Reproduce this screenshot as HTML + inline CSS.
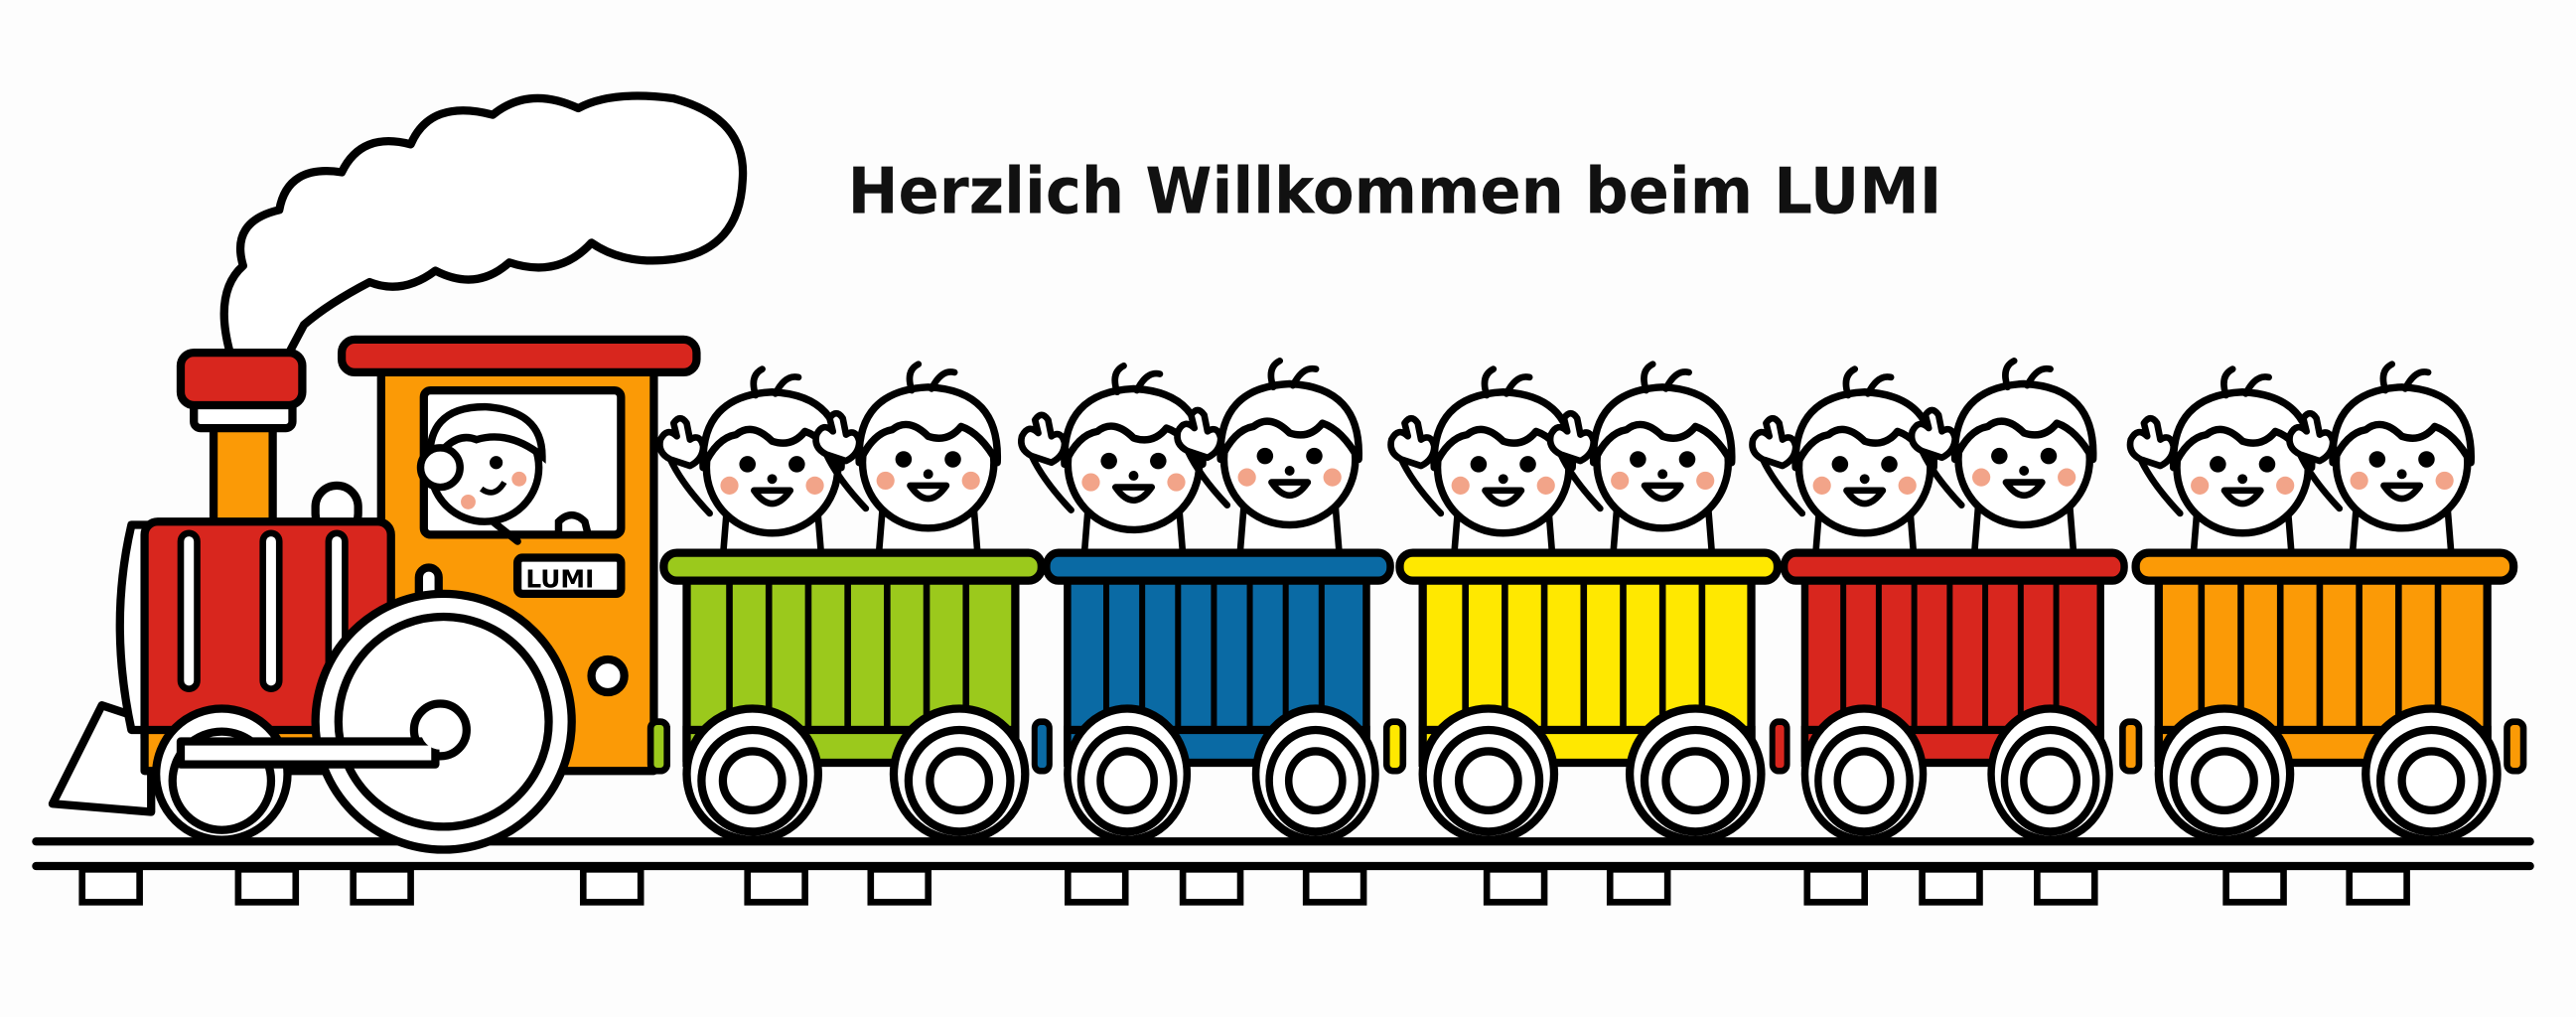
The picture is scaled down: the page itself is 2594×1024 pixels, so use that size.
<!DOCTYPE html>
<html><head><meta charset="utf-8"><style>
html,body{margin:0;padding:0;background:#fdfdfd;}
svg{display:block}
</style></head><body>
<svg width="2594" height="1024" viewBox="0 0 1568 620" preserveAspectRatio="none" xmlns="http://www.w3.org/2000/svg">
<defs>
<symbol id="kid" overflow="visible">
  <path d="M-30 55 L-28 30 Q0 45 28 30 L30 55" fill="#fff" stroke="#000" stroke-width="4" stroke-linejoin="round"/>
  <path d="M-38 28 Q-55 10 -62 -5" fill="none" stroke="#000" stroke-width="4" stroke-linecap="round"/>
  <path d="M-62 -5 q-8 -4 -6 -12 q4 -8 10 -2 l-2 -8 q4 -6 8 0 l2 10 q6 -4 8 4 q0 8 -8 12 z" fill="#fff" stroke="#000" stroke-width="4" stroke-linejoin="round"/>
  <circle cx="0" cy="0" r="40" fill="#fff" stroke="#000" stroke-width="4.5"/>
  <path d="M-42 0 Q-44 -44 0 -46 Q44 -44 42 0 Q32 -18 20 -22 Q12 -12 0 -16 Q-12 -28 -22 -20 Q-34 -18 -42 0 Z" fill="#fff" stroke="#000" stroke-width="4.5" stroke-linejoin="round"/>
  <path d="M-10 -44 q-4 -12 4 -16 M2 -45 q6 -12 14 -10" fill="none" stroke="#000" stroke-width="4" stroke-linecap="round"/>
  <circle cx="-15" cy="-2" r="5" fill="#000"/><circle cx="15" cy="-2" r="5" fill="#000"/>
  <circle cx="0" cy="7" r="3" fill="#000"/>
  <path d="M-11 14 Q0 30 11 14 Z" fill="#fff" stroke="#000" stroke-width="4" stroke-linejoin="round"/>
  <circle cx="-26" cy="11" r="5.5" fill="#f2a489"/><circle cx="26" cy="11" r="5.5" fill="#f2a489"/>
</symbol>
<symbol id="car" overflow="visible">
  <rect x="-8" y="440" width="10" height="30" rx="4" fill="currentColor" stroke="#000" stroke-width="4"/>
  <rect x="14" y="352" width="200" height="110" fill="currentColor" stroke="#000" stroke-width="5"/>
  <g stroke="#000" stroke-width="4">
    <line x1="40" y1="353" x2="40" y2="445"/><line x1="64" y1="353" x2="64" y2="445"/>
    <line x1="88" y1="353" x2="88" y2="445"/><line x1="112" y1="353" x2="112" y2="445"/>
    <line x1="136" y1="353" x2="136" y2="445"/><line x1="160" y1="353" x2="160" y2="445"/>
    <line x1="184" y1="353" x2="184" y2="445"/>
  </g>
  <rect x="14" y="445" width="200" height="20" fill="currentColor" stroke="#000" stroke-width="5"/>
  <rect x="0" y="337" width="230" height="17" rx="8" fill="currentColor" stroke="#000" stroke-width="5"/>
  <g fill="#fff" stroke="#000" stroke-width="5">
    <circle cx="54" cy="472" r="40"/><circle cx="54" cy="476" r="31"/><circle cx="54" cy="476" r="18"/>
    <circle cx="180" cy="472" r="40"/><circle cx="180" cy="476" r="31"/><circle cx="180" cy="476" r="18"/>
  </g>
</symbol>
</defs>

<text x="516" y="130" font-family="'DejaVu Sans','Liberation Sans',sans-serif" font-weight="bold" font-size="39" fill="#111" textLength="666" lengthAdjust="spacingAndGlyphs">Herzlich Willkommen beim LUMI</text>

<!-- smoke -->
<path d="M140 215 Q130 178 148 162 Q140 135 170 128 Q175 100 208 105 Q220 80 250 88 Q262 60 300 70 Q322 52 352 66 Q372 55 410 60 Q455 72 452 110 Q450 152 410 158 Q380 162 360 148 Q340 170 310 160 Q290 178 265 165 Q245 180 225 172 Q200 185 185 198 L176 215" fill="#fff" stroke="#000" stroke-width="5" stroke-linejoin="round"/>

<!-- rails -->
<g stroke="#000" stroke-width="5" stroke-linecap="round">
<line x1="22" y1="513" x2="1540" y2="513"/><line x1="22" y1="528" x2="1540" y2="528"/>
</g>
<g fill="#fff" stroke="#000" stroke-width="4">
<rect x="50" y="530" width="35" height="20"/><rect x="145" y="530" width="35" height="20"/><rect x="215" y="530" width="35" height="20"/>
<rect x="355" y="530" width="35" height="20"/><rect x="455" y="530" width="35" height="20"/><rect x="530" y="530" width="35" height="20"/>
<rect x="650" y="530" width="35" height="20"/><rect x="720" y="530" width="35" height="20"/><rect x="795" y="530" width="35" height="20"/>
<rect x="905" y="530" width="35" height="20"/><rect x="980" y="530" width="35" height="20"/><rect x="1100" y="530" width="35" height="20"/>
<rect x="1170" y="530" width="35" height="20"/><rect x="1240" y="530" width="35" height="20"/><rect x="1355" y="530" width="35" height="20"/>
<rect x="1430" y="530" width="35" height="20"/>
</g>

<!-- kids -->
<use href="#kid" x="470" y="285"/><use href="#kid" x="565" y="282"/>
<use href="#kid" x="690" y="283"/><use href="#kid" x="785" y="280"/>
<use href="#kid" x="915" y="285"/><use href="#kid" x="1012" y="282"/>
<use href="#kid" x="1135" y="285"/><use href="#kid" x="1232" y="280"/>
<use href="#kid" x="1365" y="285"/><use href="#kid" x="1462" y="282"/>

<!-- cars -->
<use href="#car" x="404" y="0" color="#9bc91c"/>
<use href="#car" x="637" y="0" color="#0a6aa4" transform="translate(637 0) scale(0.91 1) translate(-637 0)"/>
<use href="#car" x="852" y="0" color="#ffe800"/>
<use href="#car" x="1086" y="0" color="#d8261e" transform="translate(1086 0) scale(0.9 1) translate(-1086 0)"/>
<use href="#car" x="1300" y="0" color="#fb9a06"/>
<rect x="1526" y="440" width="10" height="30" rx="4" fill="#fb9a06" stroke="#000" stroke-width="4"/>

<!-- locomotive -->
<g stroke="#000" stroke-width="5" stroke-linejoin="round">
  <path d="M32 490 L62 430 L92 440 L92 495 Z" fill="#fff"/>
  <rect x="130" y="255" width="36" height="75" fill="#fb9a06"/>
  <rect x="118" y="243" width="60" height="18" rx="4" fill="#fff"/>
  <rect x="110" y="215" width="74" height="32" rx="8" fill="#d8261e"/>
  <rect x="232" y="222" width="166" height="248" fill="#fb9a06"/>
  <rect x="208" y="207" width="216" height="20" rx="8" fill="#d8261e"/>
  <rect x="258" y="238" width="120" height="88" rx="4" fill="#fff"/>
  <rect x="192" y="296" width="26" height="30" rx="13" fill="#fff"/>
  <path d="M80 320 Q66 380 80 445 L96 445 L96 320 Z" fill="#fff"/>
  <rect x="88" y="318" width="150" height="140" rx="8" fill="#d8261e"/>
  <rect x="88" y="445" width="200" height="25" fill="#fb9a06"/>
  <rect x="315" y="340" width="63" height="22" rx="3" fill="#fff"/>
  <circle cx="370" cy="412" r="10" fill="#fff"/>
</g>
<g fill="#fff" stroke="#000" stroke-width="4">
  <rect x="110" y="325" width="10" height="95" rx="5"/><rect x="160" y="325" width="10" height="95" rx="5"/><rect x="200" y="325" width="10" height="90" rx="5"/>
</g>
<text x="320" y="358" font-family="'DejaVu Sans','Liberation Sans',sans-serif" font-weight="bold" font-size="15" fill="#000">LUMI</text>
<!-- driver -->
<g stroke="#000" stroke-width="4.5">
  <circle cx="295" cy="285" r="33" fill="#fff"/>
  <path d="M262 285 Q258 248 295 248 Q330 250 330 278 Q310 262 290 268 Q275 262 262 285Z" fill="#fff"/>
  <circle cx="268" cy="285" r="12" fill="#fff"/>
  <path d="M300 318 L315 330 M340 318 q8 -8 16 0 l2 8 h-18 z" fill="#fff" stroke-linecap="round"/>
</g>
<circle cx="302" cy="282" r="4" fill="#000"/><path d="M293 298 q8 6 14 -4" fill="none" stroke="#000" stroke-width="3.5"/>
<circle cx="316" cy="292" r="4.5" fill="#f2a489"/><circle cx="285" cy="306" r="4.5" fill="#f2a489"/>
<!-- wheels -->
<g fill="#fff" stroke="#000" stroke-width="5">
  <rect x="255" y="346" width="12" height="40" rx="6"/>
  <circle cx="270" cy="440" r="78"/><circle cx="270" cy="440" r="64"/>
  <circle cx="135" cy="472" r="40"/><circle cx="135" cy="476" r="30"/>
  <circle cx="268" cy="445" r="16"/>
  <path d="M110 452 L265 452 L265 466 L110 466 Z" stroke-linejoin="round"/>
  <circle cx="268" cy="445" r="12" stroke="none"/>
</g>
<rect x="396" y="440" width="10" height="30" rx="4" fill="#9bc91c" stroke="#000" stroke-width="4"/>
</svg>
</body></html>
